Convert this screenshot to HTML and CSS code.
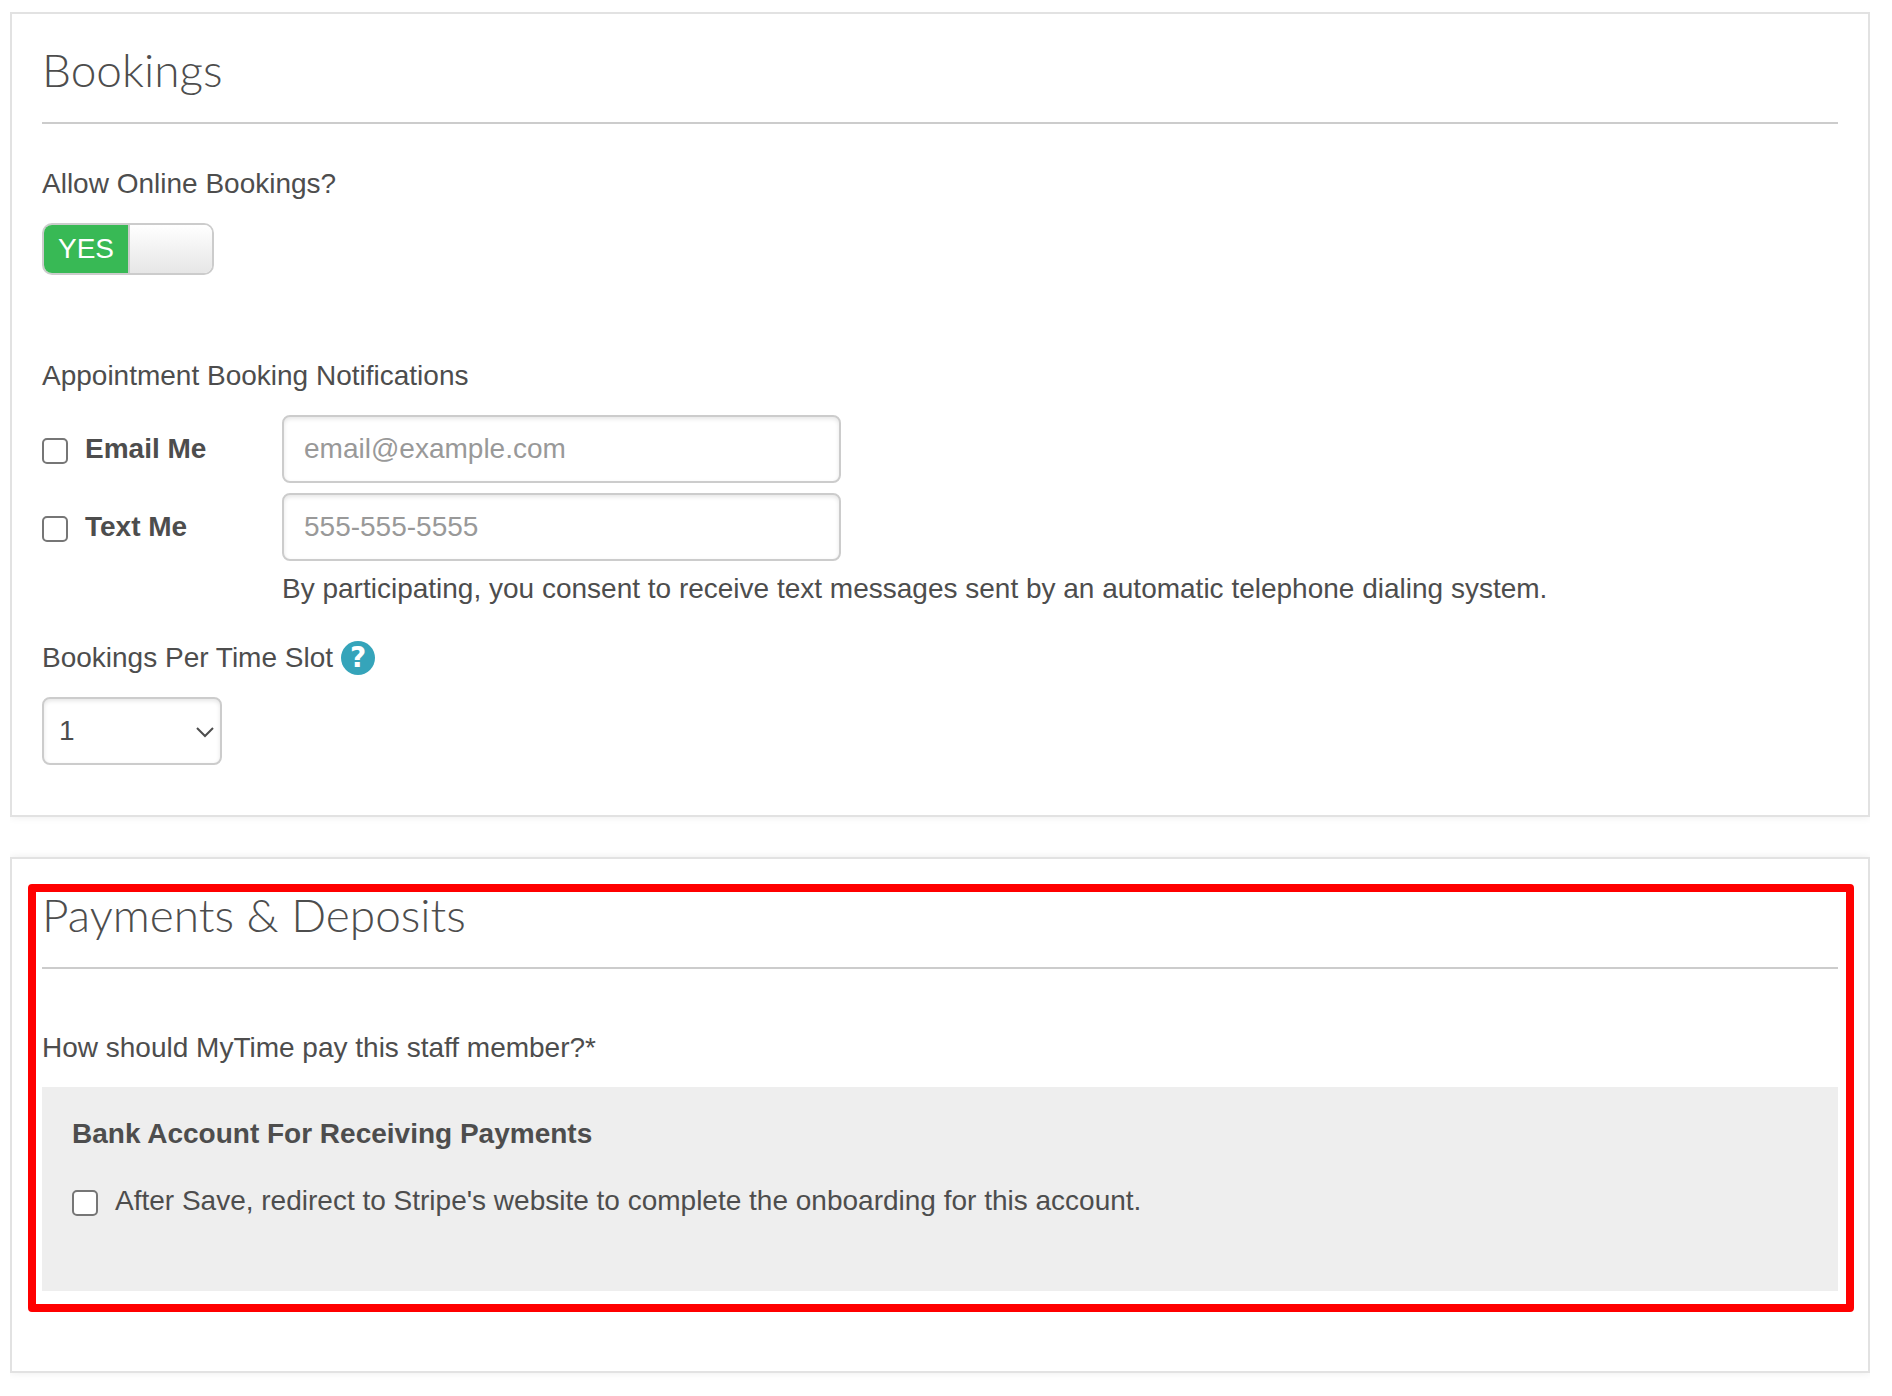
FILE: index.html
```html
<!DOCTYPE html>
<html lang="en">

<head>
	<meta charset="utf-8">
	<title>Staff member settings</title>
	<link rel="stylesheet" href="styles.css">
</head>

<body>
	<section class="card">
		<h2>Bookings</h2>

		<div class="group">
			<label class="title" for="online">Allow Online Bookings?</label>
			<div class="switch">
				<input type="checkbox" id="online" checked>
				<span class="switch-on">YES</span>
				<span class="switch-knob"></span>
			</div>
		</div>

		<fieldset class="group notifications">
			<legend class="title">Appointment Booking Notifications</legend>
			<div class="row">
				<label class="check"><input type="checkbox"> <b>Email Me</b></label>
				<input class="field" type="email" placeholder="email@example.com" aria-label="Email address">
			</div>
			<div class="row">
				<label class="check"><input type="checkbox"> <b>Text Me</b></label>
				<input class="field" type="tel" placeholder="555-555-5555" aria-label="Phone number">
			</div>
			<p class="consent">By participating, you consent to receive text messages sent by an automatic telephone dialing system.</p>
		</fieldset>

		<div class="group slots">
			<div class="title">
				<label for="slots">Bookings Per Time Slot</label>
				<button class="help" type="button" title="Help">?</button>
			</div>
			<div class="select">
				<select class="field" id="slots">
					<option>1</option>
					<option>2</option>
					<option>3</option>
				</select>
				<svg width="18" height="12" viewBox="0 0 18 12" fill="none" stroke="#4d4d4d" stroke-width="2">
					<path d="M1 2l8 8 8-8" />
				</svg>
			</div>
		</div>
	</section>

	<section class="card payments">
		<h2>Payments &amp; Deposits</h2>
		<p class="title">How should MyTime pay this staff member?*</p>
		<div class="bank">
			<h3>Bank Account For Receiving Payments</h3>
			<label class="check"><input type="checkbox"> <span>After Save, redirect to Stripe's website to complete the onboarding for this account.</span></label>
		</div>
		<div class="highlight"></div>
	</section>
</body>

</html>
```
FILE: styles.css
```css
* {
	box-sizing: border-box;
}

body {
	margin: 12px 22px 22px 10px;
	background: #fff;
	color: #4d4d4d;
	font: 28px/40px "Liberation Sans", Arial, sans-serif;
}

h2, h3, p {
	margin: 0;
}

.card {
	position: relative;
	margin-bottom: 40px;
	padding: 30px 30px 50px;
	border: 2px solid #e2e2e2;
	box-shadow: 0 0 8px rgba(0, 0, 0, 0.08);
}

h2 {
	height: 80px;
	border-bottom: 2px solid #ccc;
	font: 300 46px/52px Lato, sans-serif;
}

.group {
	margin: 39px 0 0;
	padding: 0;
	border: 0;
}

.title {
	display: block;
	margin-bottom: 18px;
	padding: 0;
	line-height: 42px;
}

/* yes / no switch */
.switch {
	position: relative;
	display: flex;
	width: 172px;
	height: 52px;
	border: 2px solid #ccc;
	border-radius: 10px;
	overflow: hidden;
}

.switch input {
	position: absolute;
	inset: 0;
	width: 100%;
	height: 100%;
	margin: 0;
	opacity: 0;
}

.switch-on {
	flex: 1;
	background: #38b955;
	color: #fff;
	line-height: 48px;
	text-align: center;
}

.switch-knob {
	width: 84px;
	border-left: 2px solid #ccc;
	background: linear-gradient(#fff, #e6e6e6);
}

/* notifications */
.notifications {
	margin-top: 80px;
}

.row {
	display: flex;
	margin-bottom: 10px;
}

.row .check {
	width: 240px;
}

.check {
	display: flex;
	align-items: center;
	gap: 17px;
}

.check input {
	appearance: none;
	width: 26px;
	height: 26px;
	margin: 4px 0 0;
	border: 2px solid #767676;
	border-radius: 5px;
	background: #fff;
}

.check input:checked {
	background: #38b955;
}

.field {
	width: 559px;
	height: 68px;
	padding: 0 20px;
	border: 2px solid #ccc;
	border-radius: 8px;
	background: #fff;
	box-shadow: inset 0 2px 4px rgba(0, 0, 0, 0.1);
	color: inherit;
	font: inherit;
}

.field::placeholder {
	color: #999;
}

.consent {
	margin: -2px 0 0 240px;
}

/* time slots */
.slots {
	margin-top: 28px;
}

.slots .title {
	display: flex;
	align-items: center;
	gap: 8px;
}

.help {
	width: 34px;
	height: 34px;
	padding: 0;
	border: 0;
	border-radius: 50%;
	background: #35a4ba;
	color: #fff;
	font: bold 28px/34px "DejaVu Sans", sans-serif;
}

.select {
	position: relative;
	width: 180px;
}

.select .field {
	display: block;
	appearance: none;
	width: 100%;
	padding: 0 15px;
}

.select svg {
	position: absolute;
	right: 8px;
	top: 29px;
	pointer-events: none;
}

/* payments */
.payments {
	padding-bottom: 80px;
}

.payments > .title {
	margin-top: 58px;
}

.bank {
	padding: 27px 30px 70px;
	background: #eee;
}

h3 {
	margin-bottom: 27px;
	font-size: 28px;
	line-height: 40px;
}

.highlight {
	position: absolute;
	inset: 25px 14px 59px 16px;
	border: 8px solid #f00;
	border-radius: 4px;
	pointer-events: none;
}
```
